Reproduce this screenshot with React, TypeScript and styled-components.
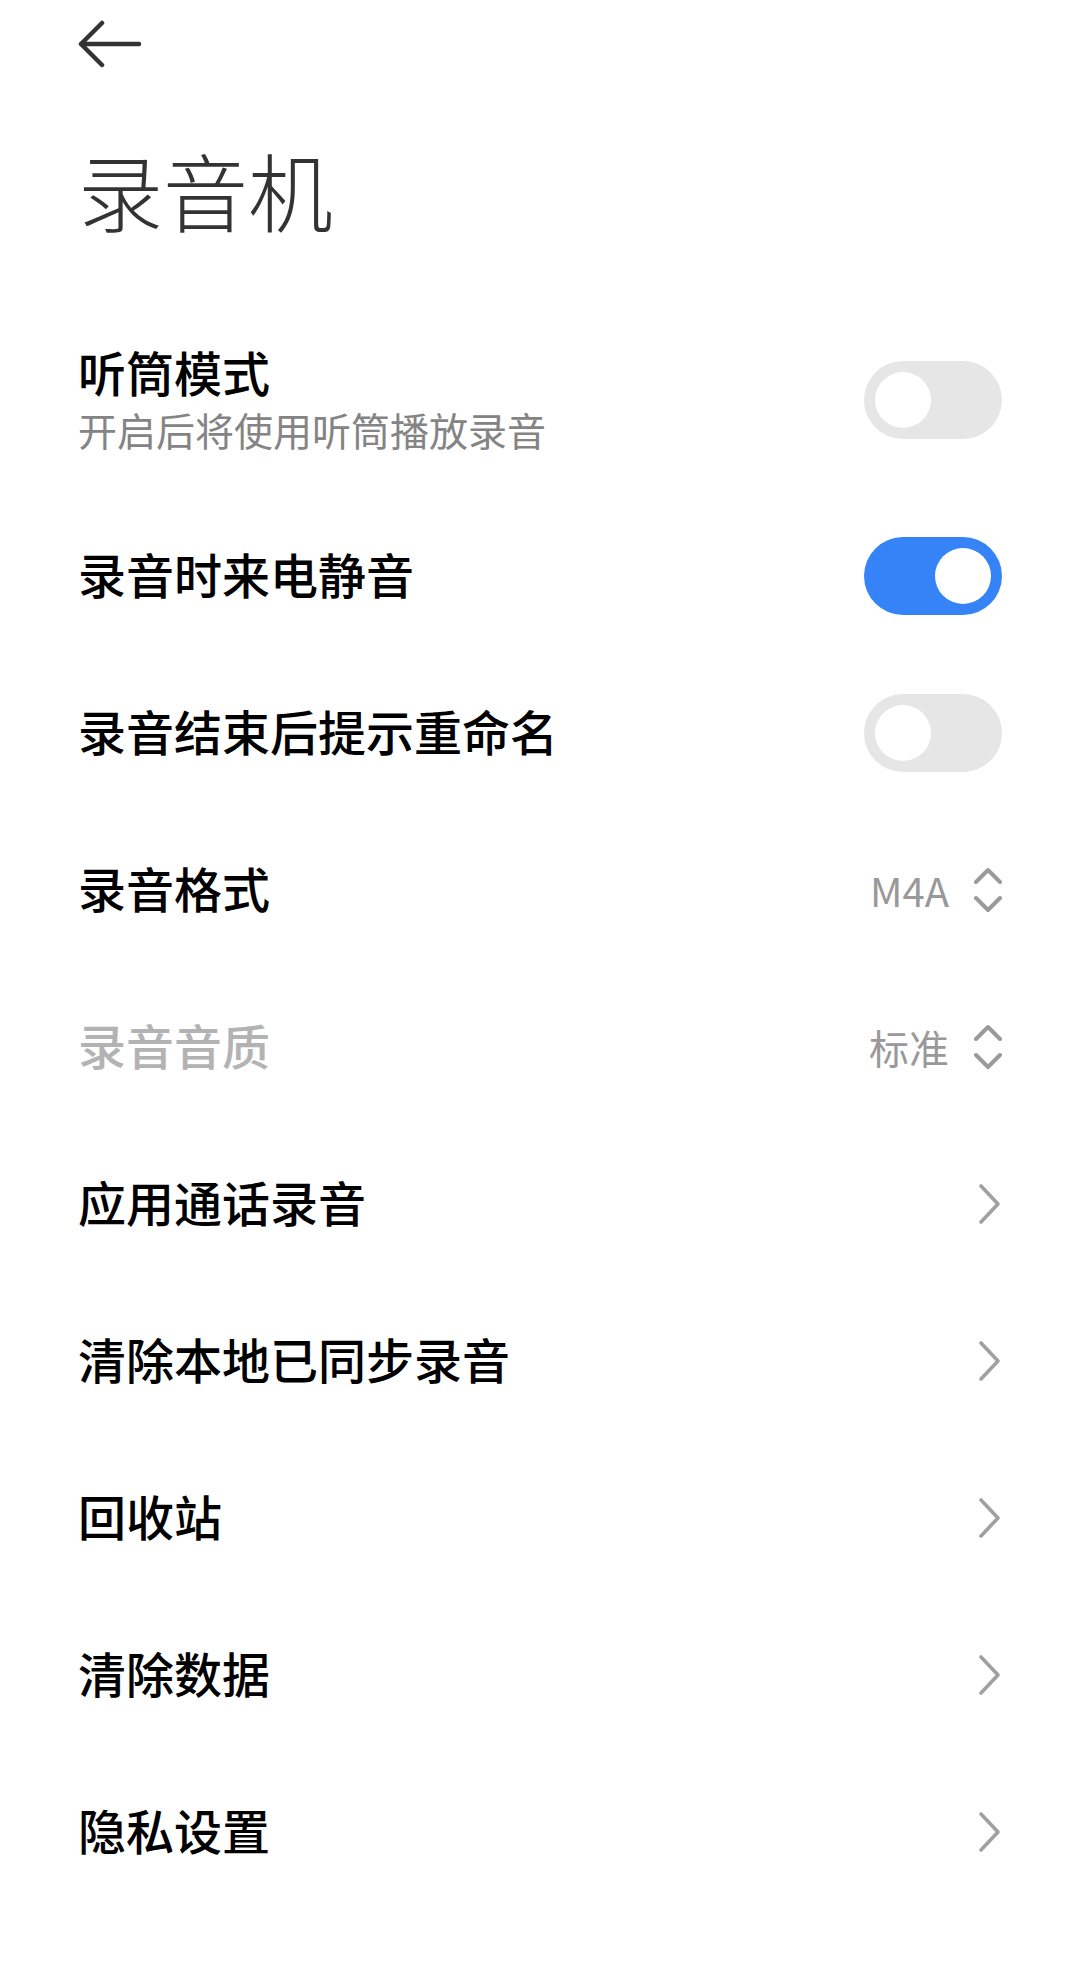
import React from 'react';
import styled, { createGlobalStyle } from 'styled-components';

const GlobalStyle = createGlobalStyle`
    html, body {
        margin: 0;
        padding: 0;
        background: #ffffff;
    }
    body {
        font-family: "Noto Sans CJK SC", "Noto Sans", sans-serif;
        -webkit-font-smoothing: antialiased;
    }
`;

const Page = styled.div`
    width: 1080px;
    min-height: 1985px;
    box-sizing: border-box;
    padding: 0 78px;
    background: #ffffff;
`;

const Header = styled.div`
    height: 88px;
    display: flex;
    align-items: center;
`;

const BackButton = styled.button`
    border: none;
    background: none;
    padding: 0;
    display: flex;
    cursor: pointer;
`;

const Title = styled.h1`
    margin: 58px 0 0 0;
    font-size: 85px;
    line-height: 85px;
    font-weight: 300;
    color: #333333;
    letter-spacing: 0;
`;

const List = styled.div`
    margin-top: 71px;
    display: flex;
    flex-direction: column;
`;

const Row = styled.div<{ $tall?: boolean }>`
    height: ${p => (p.$tall ? 195 : 157)}px;
    display: flex;
    align-items: center;
    justify-content: space-between;
`;

const TextBlock = styled.div<{ $tall?: boolean }>`
    display: flex;
    flex-direction: column;
    padding-bottom: ${p => (p.$tall ? 0 : 5)}px;
`;

const Label = styled.div<{ $disabled?: boolean }>`
    font-size: 48px;
    line-height: 58px;
    font-weight: 500;
    color: ${p => (p.$disabled ? '#b3b3b3' : '#000000')};
`;

const Summary = styled.div`
    font-size: 39px;
    line-height: 58px;
    font-weight: 400;
    color: #848484;
`;

const Track = styled.div<{ $on?: boolean }>`
    width: 138px;
    height: 78px;
    border-radius: 39px;
    box-sizing: border-box;
    padding: 11px;
    display: flex;
    justify-content: ${p => (p.$on ? 'flex-end' : 'flex-start')};
    background: ${p => (p.$on ? '#3683f8' : '#e6e6e6')};
`;

const Knob = styled.div`
    width: 56px;
    height: 56px;
    border-radius: 50%;
    background: #ffffff;
`;

const ValueGroup = styled.div`
    display: flex;
    align-items: center;
    gap: 21px;
`;

const Value = styled.span`
    font-size: 40px;
    line-height: 48px;
    font-weight: 400;
    color: #999999;
`;

const BackArrow = () => (
    <svg width="64" height="48" viewBox="0 0 64 48" fill="none">
        <path
            d="M61 24H3M24 3L3 24l21 21"
            stroke="#333333"
            strokeWidth="4.5"
            strokeLinecap="round"
            strokeLinejoin="round"
        />
    </svg>
);

const UpDown = () => (
    <svg width="32" height="48" viewBox="0 0 32 48" fill="none">
        <path
            d="M6 16L18 4l12 12M6 32l12 12 12-12"
            stroke="#9a9a9a"
            strokeWidth="4"
            strokeLinecap="round"
            strokeLinejoin="round"
        />
    </svg>
);

const Chevron = () => (
    <svg width="24" height="42" viewBox="0 0 24 42" fill="none">
        <path
            d="M3 3l17 18L3 39"
            stroke="#a0a0a0"
            strokeWidth="3.6"
            strokeLinecap="round"
            strokeLinejoin="round"
        />
    </svg>
);

const Switch = ({ on }: { on?: boolean }) => (
    <Track $on={on}>
        <Knob />
    </Track>
);

type Item =
    | { kind: 'switch'; label: string; summary?: string; on: boolean }
    | { kind: 'select'; label: string; value: string; disabled?: boolean }
    | { kind: 'link'; label: string };

const items: Item[] = [
    { kind: 'switch', label: '听筒模式', summary: '开启后将使用听筒播放录音', on: false },
    { kind: 'switch', label: '录音时来电静音', on: true },
    { kind: 'switch', label: '录音结束后提示重命名', on: false },
    { kind: 'select', label: '录音格式', value: 'M4A' },
    { kind: 'select', label: '录音音质', value: '标准', disabled: true },
    { kind: 'link', label: '应用通话录音' },
    { kind: 'link', label: '清除本地已同步录音' },
    { kind: 'link', label: '回收站' },
    { kind: 'link', label: '清除数据' },
    { kind: 'link', label: '隐私设置' },
];

const SettingRow = ({ item }: { item: Item }) => {
    const summary = item.kind === 'switch' ? item.summary : undefined;
    const disabled = item.kind === 'select' && item.disabled;

    return (
        <Row $tall={!!summary}>
            <TextBlock $tall={!!summary}>
                <Label $disabled={disabled}>{item.label}</Label>
                {summary && <Summary>{summary}</Summary>}
            </TextBlock>
            {item.kind === 'switch' && <Switch on={item.on} />}
            {item.kind === 'select' && (
                <ValueGroup>
                    <Value>{item.value}</Value>
                    <UpDown />
                </ValueGroup>
            )}
            {item.kind === 'link' && <Chevron />}
        </Row>
    );
};

const App = () => (
    <>
        <GlobalStyle />
        <Page>
            <Header>
                <BackButton aria-label="返回">
                    <BackArrow />
                </BackButton>
            </Header>
            <Title>录音机</Title>
            <List>
                {items.map(item => (
                    <SettingRow key={item.label} item={item} />
                ))}
            </List>
        </Page>
    </>
);

export default App;
